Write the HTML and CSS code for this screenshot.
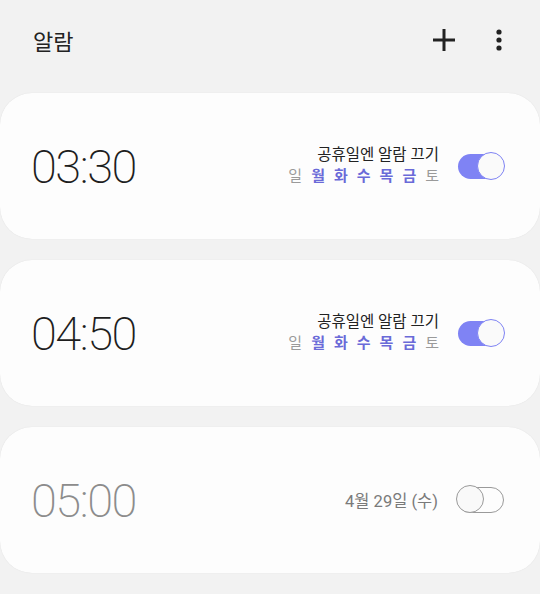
FILE: index.html
```html
<!DOCTYPE html>
<html lang="ko">
<head>
    <meta charset="UTF-8">
    <meta name="viewport" content="width=device-width, initial-scale=1.0">
    <title>알람</title>
    <link rel="stylesheet" href="styles.css">
</head>
<body>
    <header class="topbar">
        <h1>알람</h1>
        <div class="actions">
            <svg class="icon" width="28" height="28" viewBox="0 0 28 28">
                <path d="M14 3v22M3 14h22" stroke="#222" stroke-width="3" fill="none"/>
            </svg>
            <svg class="icon" width="10" height="28" viewBox="0 0 10 28">
                <circle cx="5" cy="6" r="2.6" fill="#222"/>
                <circle cx="5" cy="14" r="2.6" fill="#222"/>
                <circle cx="5" cy="22" r="2.6" fill="#222"/>
            </svg>
        </div>
    </header>

    <main class="list">
        <div class="card">
            <div class="time">03:30</div>
            <div class="info">
                <div class="note">공휴일엔 알람 끄기</div>
                <div class="days">
                    <span class="off">일</span>
                    <span>월</span><span>화</span><span>수</span><span>목</span><span>금</span>
                    <span class="off">토</span>
                </div>
            </div>
            <div class="switch on"><i></i></div>
        </div>

        <div class="card">
            <div class="time">04:50</div>
            <div class="info">
                <div class="note">공휴일엔 알람 끄기</div>
                <div class="days">
                    <span class="off">일</span>
                    <span>월</span><span>화</span><span>수</span><span>목</span><span>금</span>
                    <span class="off">토</span>
                </div>
            </div>
            <div class="switch on"><i></i></div>
        </div>

        <div class="card disabled">
            <div class="time">05:00</div>
            <div class="info">
                <div class="date">4월 29일 (수)</div>
            </div>
            <div class="switch"><i></i></div>
        </div>
    </main>
</body>
</html>
```

FILE: styles.css
```css
body {
    margin: 0;
    background: #f2f2f2;
    font-family: Roboto, "Noto Sans CJK KR", sans-serif;
    color: #222;
    width: 540px;
    height: 594px;
    overflow: hidden;
}
.topbar {
    display: flex;
    align-items: center;
    justify-content: space-between;
    height: 80px;
    padding: 0 36px 0 33px;
}
.topbar h1 {
    margin: 0;
    font-size: 22px;
    font-weight: 400;
    color: #222;
}
.actions {
    display: flex;
    align-items: center;
    gap: 36px;
}
.icon {
    display: block;
}
.list {
    display: flex;
    flex-direction: column;
    gap: 21px;
    padding-top: 13px;
}
.card {
    display: flex;
    align-items: center;
    height: 146px;
    background: #fdfdfd;
    border-radius: 32px;
    padding: 0 36px 0 31px;
    box-shadow: 0 0 1px rgba(0, 0, 0, 0.12);
}
.time {
    font-family: Roboto, sans-serif;
    font-weight: 200;
    font-size: 47px;
    letter-spacing: -1.5px;
    color: #1e1e1e;
    flex: 1;
}
.info {
    text-align: right;
    margin-right: 19px;
}
.note {
    font-size: 15.5px;
    line-height: 20px;
    color: #222;
}
.days {
    display: flex;
    justify-content: flex-end;
    gap: 9px;
    font-size: 15px;
    line-height: 22px;
    font-weight: 700;
    color: #6a6ad8;
}
.days .off {
    font-weight: 400;
    color: #9a9a9a;
}
.date {
    font-size: 16.5px;
    color: #7a7a7a;
}
.switch {
    position: relative;
    width: 46px;
    height: 25px;
    border-radius: 13px;
    background: #7f83f4;
}
.switch i {
    position: absolute;
    top: -2px;
    right: -1px;
    width: 26px;
    height: 26px;
    border-radius: 50%;
    background: #fafafa;
    border: 1.5px solid #7f83f4;
}
.card.disabled .time {
    color: #8c8c8c;
}
.switch:not(.on) {
    background: #fdfdfd;
    border: 1.5px solid #9a9a9a;
    width: 45px;
    height: 24px;
}
.switch:not(.on) i {
    right: auto;
    left: -2px;
    top: -3px;
    border-color: #9a9a9a;
    background: #f9f9f9;
}
```
